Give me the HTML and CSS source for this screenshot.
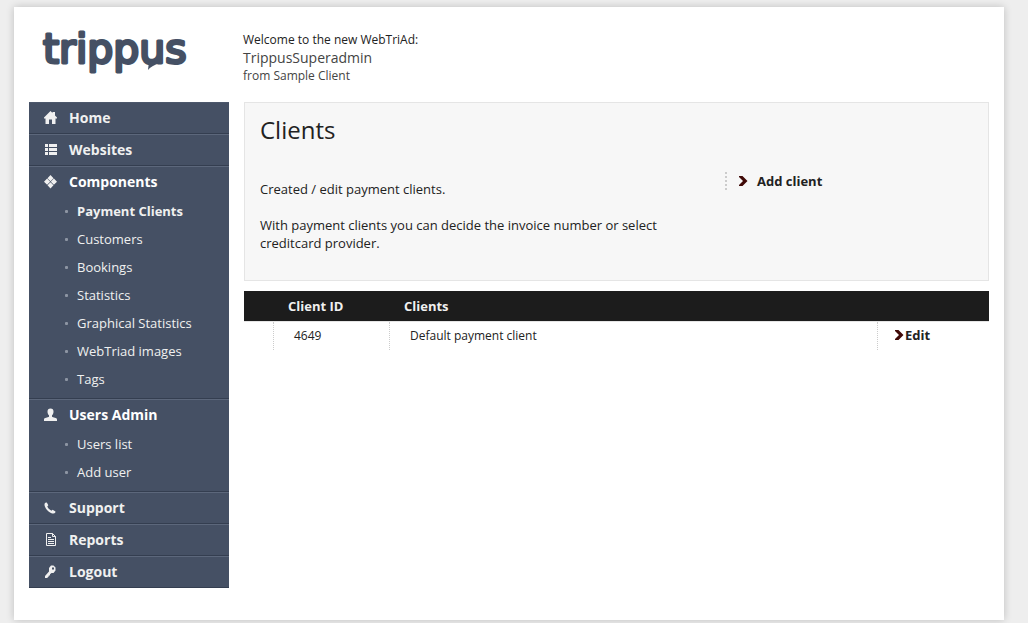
FILE: index.html
```html
<!DOCTYPE html>
<html lang="en">
<head>
  <meta charset="UTF-8">
  <title>Clients - WebTriAd</title>
  <meta name="viewport" content="width=device-width, initial-scale=1.0">
  <link rel="stylesheet" href="styles.css">
</head>
<body>
  <div class="page">
    <header class="header">
      <a class="logo" href="#">
        <svg width="160" height="60" viewBox="0 0 160 60">
          <text class="logo-text" x="2" y="40">trippus</text>
          <path class="logo-tail" d="M108 38 L119 40 Q110 43 107 47 Z"/>
        </svg>
      </a>
      <div class="welcome">
        <div class="welcome-intro">Welcome to the new WebTriAd:</div>
        <div class="welcome-user">TrippusSuperadmin</div>
        <div class="welcome-client">from Sample Client</div>
      </div>
    </header>

    <div class="columns">
      <nav class="menu">
        <div class="menu-group">
          <a class="menu-title" href="#">
            <svg class="icon" viewBox="0 0 14 14"><path d="M7.500 0 9.500 2V1h2.500v3.500L14 6.500V7.500H12.500V13H9V8.500H6V13H2.500V7.500H1V6.500z"/></svg>
            Home
          </a>
        </div>
        <div class="menu-group">
          <a class="menu-title" href="#">
            <svg class="icon" viewBox="0 0 14 14"><path d="M2 1h3v3H2zM6 1h8v3H6zM2 5h3v3H2zM6 5h8v3H6zM2 9h3v3H2zM6 9h8v3H6z"/></svg>
            Websites
          </a>
        </div>
        <div class="menu-group">
          <a class="menu-title active" href="#">
            <svg class="icon" viewBox="0 0 14 14"><path d="M7.500 0 10.500 3.200 7.500 6.200 4.500 3.200zM4.100 3.600 7.200 6.700 4.100 9.800 1 6.700zM10.900 3.600l3.100 3.100-3.100 3.100-3.100-3.100zM7.500 7.200l3 3-3 3.200-3-3.200z"/></svg>
            Components
          </a>
          <ul class="submenu">
            <li><a class="current" href="#">Payment Clients</a></li>
            <li><a href="#">Customers</a></li>
            <li><a href="#">Bookings</a></li>
            <li><a href="#">Statistics</a></li>
            <li><a href="#">Graphical Statistics</a></li>
            <li><a href="#">WebTriad images</a></li>
            <li><a href="#">Tags</a></li>
          </ul>
        </div>
        <div class="menu-group">
          <a class="menu-title active" href="#">
            <svg class="icon" viewBox="0 0 14 14"><path d="M7.500.5c2 0 3 1.200 3 3.200 0 1.600-.6 2.800-1.500 3.600v1.500c1 .8 5 .8 5 2.700V13H1v-1.500c0-1.900 4-1.900 5-2.700V7.300C5.100 6.500 4.500 5.300 4.500 3.700 4.500 1.700 5.500.5 7.500.5z"/></svg>
            Users Admin
          </a>
          <ul class="submenu">
            <li><a href="#">Users list</a></li>
            <li><a href="#">Add user</a></li>
          </ul>
        </div>
        <div class="menu-group">
          <a class="menu-title" href="#">
            <svg class="icon" viewBox="0 0 14 14"><path d="M2.300 1.700 3.800 1.400 5.300 4.300 4.300 5.500C5 7.200 6.700 8.800 8.400 9.700L9.600 8.700 12.500 10.500 12.200 11.800C11.300 13 9.500 12.700 7.500 11.700 4.600 10.200 2.700 8 1.900 5.500 1.300 3.800 1.300 2.400 2.300 1.700z"/></svg>
            Support
          </a>
        </div>
        <div class="menu-group">
          <a class="menu-title" href="#">
            <svg class="icon icon-line" viewBox="0 0 14 14"><path d="M3.500.5h6l3 3v9h-9zM9.500.5v3h3M5 4.500h3M5 6.500h6M5 8.500h6M5 10.500h6"/></svg>
            Reports
          </a>
        </div>
        <div class="menu-group">
          <a class="menu-title" href="#">
            <svg class="icon" viewBox="0 0 14 14"><path fill-rule="evenodd" d="M8 .5h2.500L12.500 2.500v3L10.500 8H8.500L7 9.300v1.200H5.900L5.500 11.700 4 13H2v-2L6 6.500V3zM9 2.500v2h2v-2z"/></svg>
            Logout
          </a>
        </div>
      </nav>

      <main class="content">
        <section class="intro">
          <h1>Clients</h1>
          <div class="intro-row">
            <div class="intro-text">
              <p>Created / edit payment clients.</p>
              <p>With payment clients you can decide the invoice number or select creditcard provider.</p>
            </div>
            <div class="intro-actions">
              <a class="action" href="#">
                <svg class="arrow" viewBox="0 0 9 10"><path d="M0 0h3.500l5 5-5 5H0v-1l4-4-4-4z"/></svg>
                Add client
              </a>
            </div>
          </div>
        </section>

        <table class="list">
          <thead>
            <tr>
              <th class="col-mark"></th>
              <th class="col-id">Client ID</th>
              <th>Clients</th>
              <th class="col-edit"></th>
            </tr>
          </thead>
          <tbody>
            <tr>
              <td></td>
              <td>4649</td>
              <td>Default payment client</td>
              <td class="edit-cell">
                <a class="edit" href="#"><svg class="arrow" viewBox="0 0 9 10"><path d="M0 0h3.500l5 5-5 5H0v-1l4-4-4-4z"/></svg>Edit</a>
              </td>
            </tr>
          </tbody>
        </table>
      </main>
    </div>
  </div>
</body>
</html>
```
FILE: styles.css
```css
* {
  box-sizing: border-box;
}

body {
  margin: 0;
  padding: 7px 24px 3px 14px;
  background: #eee;
  color: #222;
  font-family: "Open Sans", "Noto Sans", sans-serif;
  font-size: 13px;
  line-height: 18px;
}

a {
  color: inherit;
  text-decoration: none;
}

.page {
  padding: 0 15px 32px;
  background: #fff;
  box-shadow: 0 0 8px rgba(0, 0, 0, 0.2);
}

/* header */
.header {
  display: flex;
  height: 95px;
}

.logo {
  width: 214px;
  padding: 16px 0 0 12px;
}

.logo svg {
  display: block;
}

.logo-text {
  font-family: "DejaVu Sans", sans-serif;
  font-size: 41px;
  fill: #455064;
  stroke: #455064;
  stroke-width: 3px;
  stroke-linejoin: round;
}

.logo-tail {
  fill: #455064;
}

.welcome {
  padding-top: 24px;
  font-size: 12px;
}

.welcome-user {
  color: #444;
  font-size: 14px;
}

.welcome-client {
  color: #444;
}

/* left menu */
.columns {
  display: flex;
  align-items: flex-start;
  gap: 15px;
}

.menu {
  flex: 0 0 200px;
  background: #455064;
  color: #f0f0f0;
}

.menu-group {
  border-top: 1px solid #5c677b;
  border-bottom: 1px solid #343e50;
}

.menu-group:first-child {
  border-top-color: #4d586c;
}

.menu-title {
  display: flex;
  align-items: center;
  gap: 12px;
  height: 30px;
  padding-left: 14px;
  font-size: 14px;
  font-weight: 700;
}

.menu-title.active {
  color: #fff;
}

.icon {
  width: 14px;
  height: 14px;
  fill: #f0f0f0;
}

.icon-line {
  fill: none;
  stroke: #f0f0f0;
}

.submenu {
  margin: 0;
  padding: 0 0 5px 36px;
  list-style: none;
}

.submenu li {
  display: flex;
  align-items: center;
  gap: 9px;
  height: 28px;
}

.submenu li::before {
  content: "";
  width: 3px;
  height: 3px;
  border-radius: 1px;
  background: #8d95a3;
}

.submenu .current {
  font-weight: 700;
}

/* content */
.content {
  flex: 1;
  min-width: 0;
}

.intro {
  margin-bottom: 10px;
  padding: 11px 15px 10px;
  border: 1px solid #e5e5e5;
  background: #f7f7f7;
}

h1 {
  margin: 0 0 26px;
  font-size: 24px;
  font-weight: 400;
  line-height: 32px;
}

.intro-row {
  display: flex;
}

.intro-text {
  flex: 0 0 465px;
  padding: 8px 20px 0 0;
}

.intro-text p {
  margin: 0 0 18px;
}

.action {
  display: flex;
  align-items: center;
  gap: 9px;
  padding-left: 12px;
  border-left: 2px dotted #ccc;
  font-weight: 700;
}

.arrow {
  width: 9px;
  height: 10px;
  fill: #400a08;
}

/* table */
.list {
  width: 100%;
  border-spacing: 0;
  table-layout: fixed;
}

.list th {
  height: 31px;
  padding: 0 0 0 15px;
  border-bottom: 1px solid #e5e5e5;
  background: #1c1c1c;
  background-clip: padding-box;
  color: #f0f0f0;
  text-align: left;
}

.list td {
  height: 28px;
  padding: 0 0 0 20px;
  border-left: 1px dotted #ccc;
  font-size: 12px;
}

.list td:first-child {
  border-left: 0;
}

.list .edit-cell {
  padding: 0 0 2px 17px;
}

.list .col-mark {
  width: 29px;
}

.list .col-id {
  width: 116px;
}

.list .col-edit {
  width: 112px;
}

.edit {
  display: flex;
  align-items: center;
  gap: 1px;
  font-size: 13px;
  font-weight: 700;
}
```
